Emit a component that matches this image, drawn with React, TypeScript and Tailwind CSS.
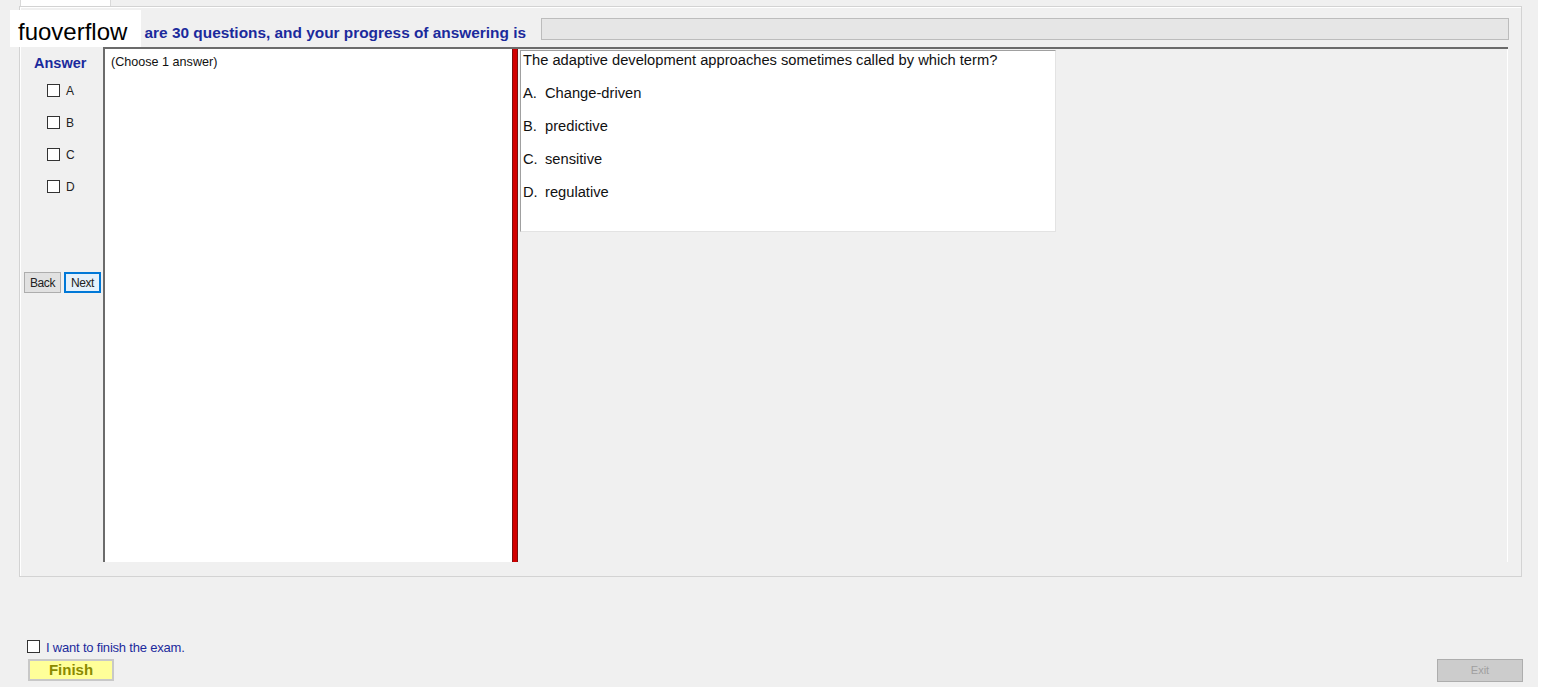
import React from "react";

const options = [
    { key: "A", text: "Change-driven" },
    { key: "B", text: "predictive" },
    { key: "C", text: "sensitive" },
    { key: "D", text: "regulative" },
];

function Box() {
    return <span className="inline-block w-[13px] h-[13px] border border-[#333] bg-white" />;
}

export default function App() {
    return (
        <div className="w-[1542px] h-[690px] bg-white font-['Liberation_Sans',Arial,sans-serif]">
            <div className="relative w-[1538px] h-[687px] bg-[#f0f0f0] flex flex-col">
                {/* tab stub */}
                <div className="ml-[20px] w-[91px] h-[6px] bg-white border-x border-[#d9d9d9]" />

                {/* group box */}
                <div className="ml-[19px] w-[1503px] h-[571px] border border-[#d3d3d3] shadow-[inset_1px_1px_0_#fff] flex flex-col">
                    <div className="mt-[11px] flex h-[22px]">
                        <div className="w-[521px] pr-[15px] pt-[5px] text-right text-[15.4px] leading-[20px] font-bold text-[#1b2a9c] whitespace-nowrap">
                            are 30 questions, and your progress of answering is
                        </div>
                        <div className="w-[968px] h-[22px] bg-[#e6e6e6] border border-[#bcbcbc]" />
                    </div>

                    <div className="mt-[7px] flex h-[515px]">
                        {/* answer column */}
                        <div className="w-[83px] pl-[4px] flex flex-col">
                            <div className="mt-[8px] pl-[10px] text-[14.5px] font-bold text-[#1b2a9c] leading-[16px]">Answer</div>
                            <div className="mt-[13px] flex flex-col gap-[19px] pl-[23px]">
                                {options.map((o) => (
                                    <label key={o.key} className="flex items-center gap-[6px] h-[13px] text-[12px] text-[#222]">
                                        <Box />
                                        {o.key}
                                    </label>
                                ))}
                            </div>
                            <div className="mt-[79px] flex gap-[3px]">
                                <button className="w-[37px] h-[21px] bg-[#e1e1e1] border border-[#adadad] text-[12px] text-[#222] tracking-[-0.4px]">Back</button>
                                <button className="w-[37px] h-[21px] bg-[#e5f1fb] border-2 border-[#0078d7] text-[12px] text-[#222] tracking-[-0.4px]">Next</button>
                            </div>
                        </div>

                        {/* main panel */}
                        <div className="w-[1405px] flex border-t-2 border-[#6b6b6b]">
                            <div className="w-[409px] bg-white border-l-2 border-[#6b6b6b] pl-[6px] pt-[4px] text-[12.6px] text-[#111]">
                                (Choose 1 answer)
                            </div>
                            <div className="w-[6px] bg-[#d20000] border-x border-[#7a1010]" />
                            <div className="flex-1 bg-[#f0f0f0] border-r border-white pl-[2px] pt-[1px]">
                                <div className="w-[536px] h-[182px] bg-white border border-[#a0a0a0] border-r-[#e3e3e3] border-b-[#e3e3e3] pl-[2px] text-[14.7px] text-[#111]">
                                    <div className="leading-[18px]">The adaptive development approaches sometimes called by which term?</div>
                                    <div className="mt-[15px] flex flex-col gap-[15px]">
                                        {options.map((o) => (
                                            <div key={o.key} className="leading-[18px] flex">
                                                <span className="w-[22px]">{o.key}.</span>
                                                <span>{o.text}</span>
                                            </div>
                                        ))}
                                    </div>
                                </div>
                            </div>
                        </div>
                    </div>
                </div>

                {/* bottom area */}
                <div className="flex-1 relative">
                    <label className="absolute left-[27px] top-[58px] flex items-center gap-[6px] text-[13px] text-[#1b2a9c] tracking-[-0.2px]">
                        <Box />
                        <span className="pt-[3px]">I want to finish the exam.</span>
                    </label>
                    <button className="absolute left-[28px] top-[82px] w-[86px] h-[22px] bg-[#ffff99] border-2 border-[#c8c8c8] text-[15px] font-bold text-[#8a8a00] leading-[18px]">
                        Finish
                    </button>
                    <button className="absolute left-[1437px] top-[82px] w-[86px] h-[23px] bg-[#cccccc] border border-[#adadad] text-[11px] text-[#a0a0a0]">
                        Exit
                    </button>
                </div>

                {/* watermark */}
                <div className="absolute left-[10px] top-[10px] w-[131px] h-[37px] bg-white pl-[8px] pt-[8px] text-[24px] leading-[28px] text-black">
                    fuoverflow
                </div>
            </div>
        </div>
    );
}
